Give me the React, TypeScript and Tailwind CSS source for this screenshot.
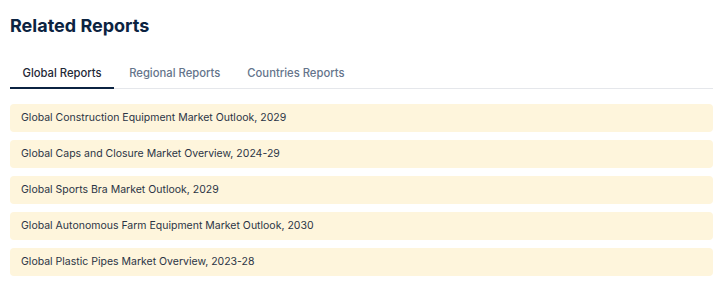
const tabs = ['Global Reports', 'Regional Reports', 'Countries Reports']

const reports = [
  'Global Construction Equipment Market Outlook, 2029',
  'Global Caps and Closure Market Overview, 2024-29',
  'Global Sports Bra Market Outlook, 2029',
  'Global Autonomous Farm Equipment Market Outlook, 2030',
  'Global Plastic Pipes Market Overview, 2023-28',
]

export default function App() {
  return (
    <div className="w-[726px] h-[292px] bg-white pl-[10px] pr-[13px] font-['Inter',sans-serif]">
      <h1 className="pt-[15px] text-[18px] leading-[22px] font-bold text-[#0b2341]">Related Reports</h1>

      {/* Tabs */}
      <div className="mt-[28px] flex gap-[3px] border-b border-[#e5e7eb]">
        {tabs.map((tab, i) => (
          <div
            key={tab}
            className={
              i === 0
                ? 'px-[12.5px] pb-[6px] text-[11.25px] leading-[16px] font-medium text-[#1f2937] border-b-2 border-[#0b2341] -mb-px'
                : 'px-[12px] pb-[6px] text-[11.25px] leading-[16px] font-medium text-[#64748b]'
            }
          >
            {tab}
          </div>
        ))}
      </div>

      {/* Report list */}
      <div className="mt-[15px] flex flex-col gap-[8px]">
        {reports.map((r) => (
          <div
            key={r}
            className="h-[28px] flex items-center px-[11px] rounded-[4px] bg-[#fef5dc] text-[10.5px] text-[#2b3445]"
          >
            {r}
          </div>
        ))}
      </div>
    </div>
  )
}
